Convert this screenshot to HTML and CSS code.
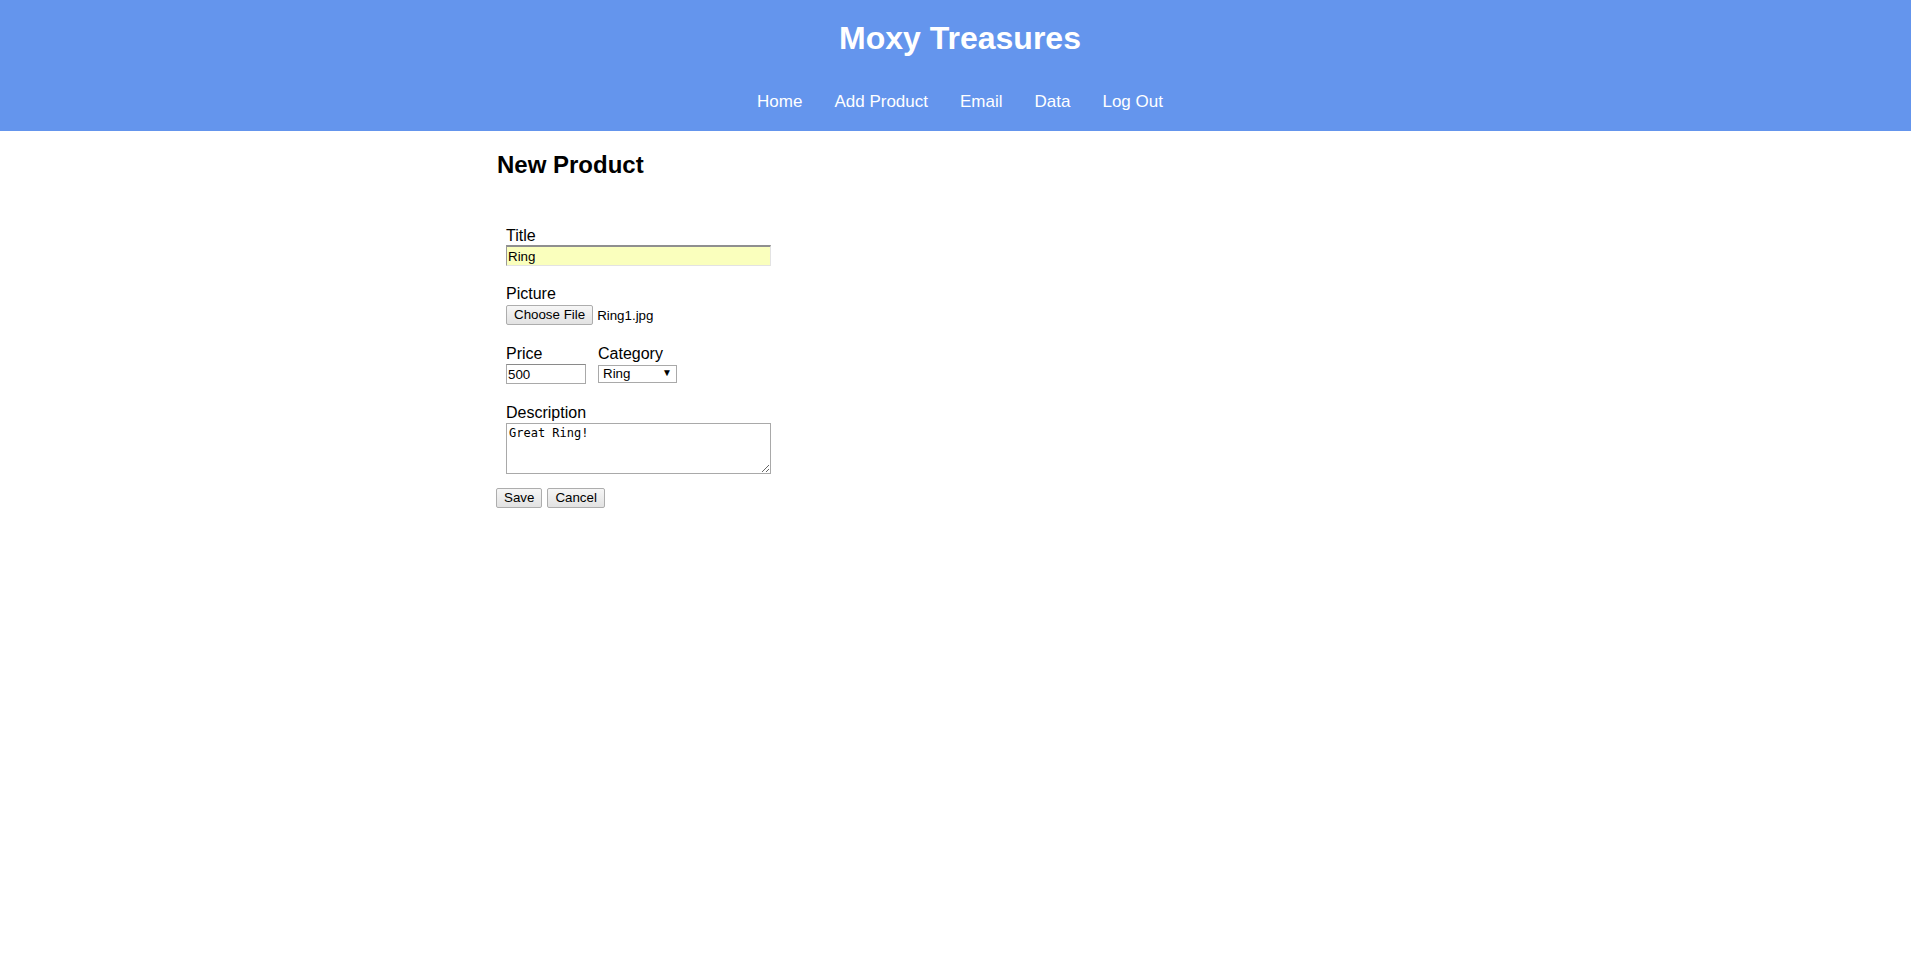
FILE: index.html
```html
<!DOCTYPE html>
<html>
<head>
<meta charset="utf-8">
<title>Moxy Treasures</title>
<link rel="stylesheet" href="styles.css">
</head>
<body>
<header class="site-header">
  <h1 class="site-title">Moxy Treasures</h1>
  <nav class="site-nav">
    <a href="#">Home</a>
    <a href="#">Add Product</a>
    <a href="#">Email</a>
    <a href="#">Data</a>
    <a href="#">Log Out</a>
  </nav>
</header>
<main class="main">
  <h2 class="page-title">New Product</h2>
  <form class="product-form">
    <div class="fields">
      <div class="field field-title">
        <label class="label">Title</label>
        <input class="input input-title" type="text" value="Ring">
      </div>
      <div class="field field-picture">
        <label class="label">Picture</label>
        <div class="file-row">
          <button type="button" class="btn">Choose File</button>
          <span class="file-name">Ring1.jpg</span>
        </div>
      </div>
      <div class="field-row">
        <div class="field">
          <label class="label">Price</label>
          <input class="input input-price" type="text" value="500">
        </div>
        <div class="field">
          <label class="label">Category</label>
          <span class="select-wrap">
            <select class="select"><option>Ring</option></select>
            <span class="select-arrow">&#9660;</span>
          </span>
        </div>
      </div>
      <div class="field field-desc">
        <label class="label">Description</label>
        <textarea class="textarea">Great Ring!</textarea>
      </div>
    </div>
    <div class="actions">
      <button type="button" class="btn">Save</button>
      <button type="button" class="btn">Cancel</button>
    </div>
  </form>
</main>
</body>
</html>
```
FILE: styles.css
```css
html, body {
  margin: 0;
  padding: 0;
  background: #fff;
  font-family: "Liberation Sans", Arial, sans-serif;
  color: #000;
}

.site-header {
  background: #6495ed;
  height: 131px;
  box-sizing: border-box;
  padding: 20px 0 0 9px;
  text-align: center;
}

.site-title {
  margin: 0;
  font-size: 32px;
  line-height: 37px;
  font-weight: bold;
  color: #fff;
}

.site-nav {
  margin-top: 35px;
  display: flex;
  justify-content: center;
  gap: 32px;
  font-size: 17px;
  line-height: 20px;
}

.site-nav a {
  color: #fff;
  text-decoration: none;
}

.main {
  width: 917px;
  margin: 0 auto;
}

.page-title {
  margin: 20px 0 0 0;
  font-size: 24px;
  line-height: 28px;
  font-weight: bold;
}

.product-form {
  margin-top: 48px;
}

.fields {
  padding-left: 9px;
  display: flex;
  flex-direction: column;
  align-items: flex-start;
}

.field {
  display: flex;
  flex-direction: column;
  align-items: flex-start;
}

.label {
  display: block;
  font-size: 16px;
  line-height: 18px;
  height: 18px;
}

.field-title {
  margin-bottom: 19px;
}

.field-picture {
  margin-bottom: 20px;
}

.field-row {
  display: flex;
  gap: 12px;
  margin-bottom: 20px;
}

.field-desc {
  margin-bottom: 14px;
}

.input {
  box-sizing: border-box;
  font-family: "Liberation Sans", Arial, sans-serif;
  font-size: 13.333px;
  padding: 0 1px;
  margin: 0;
  outline: none;
  color: #000;
}

.input-title {
  width: 265px;
  height: 21px;
  background: #faffbd;
  border: 1px solid;
  border-top-width: 2px;
  border-color: #8f8f8f #e3e3e3 #e3e3e3 #9a9a9a;
}

.input-price {
  width: 80px;
  height: 20px;
  margin-top: 1px;
  background: #fff;
  border: 1px solid #a9a9a9;
  border-top-color: #8a8a8a;
}

.file-row {
  margin-top: 2px;
  display: flex;
  align-items: center;
  gap: 4px;
  font-size: 13.333px;
}

.btn {
  box-sizing: border-box;
  height: 20px;
  margin: 0;
  padding: 0 7px;
  font-family: "Liberation Sans", Arial, sans-serif;
  font-size: 13.333px;
  line-height: 18px;
  color: #000;
  background: linear-gradient(#f6f6f6, #e2e2e2);
  border: 1px solid #adadad;
  border-radius: 2px;
}

.file-name {
  font-size: 13.333px;
}

.select-wrap {
  position: relative;
  display: inline-block;
  margin-top: 1px;
}

.select {
  appearance: none;
  -webkit-appearance: none;
  box-sizing: border-box;
  width: 79px;
  height: 18px;
  margin: 0;
  padding: 0 0 0 4px;
  border: 1px solid #a9a9a9;
  border-radius: 0;
  background: #fff;
  font-family: "Liberation Sans", Arial, sans-serif;
  font-size: 13.333px;
  line-height: 16px;
  color: #000;
  outline: none;
}

.select-arrow {
  position: absolute;
  right: 5px;
  top: 3px;
  font-size: 10px;
  line-height: 11px;
  color: #000;
  pointer-events: none;
}

.textarea {
  box-sizing: border-box;
  width: 265px;
  height: 51px;
  margin: 1px 0 0 0;
  padding: 2px 2px;
  border: 1px solid #a9a9a9;
  font-family: "DejaVu Sans Mono", "Liberation Mono", monospace;
  font-size: 12px;
  line-height: 14px;
  color: #000;
  outline: none;
  resize: both;
}

.actions {
  display: flex;
  gap: 5px;
  margin-left: -1px;
}
```
